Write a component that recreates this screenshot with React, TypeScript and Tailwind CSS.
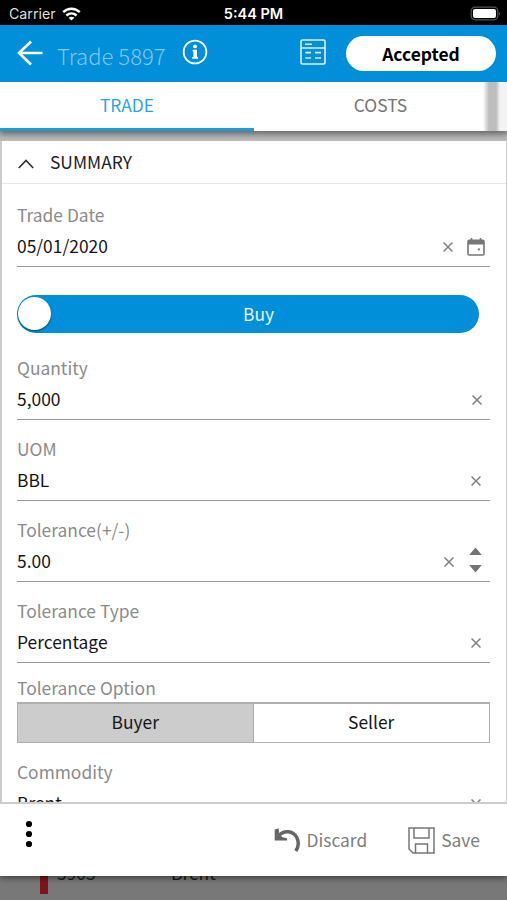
import { useState, type ReactNode } from 'react';

function ClearIcon({ className = '' }: { className?: string }) {
  return (
    <svg className={`h-[10px] w-[10px] ${className}`} viewBox="0 0 10 10" fill="none" stroke="#808080" strokeWidth="1.5">
      <path d="M0.5 0.5L9.5 9.5M9.5 0.5L0.5 9.5" />
    </svg>
  );
}

function Field({ label, value, children }: { label: string; value: string; children?: ReactNode }) {
  return (
    <div className="h-[81px] shrink-0 border-b border-[#999] pt-[17px]">
      <div className="h-6 text-[17.4px] leading-6 text-[#8b8b8b]">{label}</div>
      <div className="flex h-[39px] items-center justify-between">
        <span className="mb-px text-[17.4px] leading-6 text-[#151515]">{value}</span>
        <div className="flex items-center">{children}</div>
      </div>
    </div>
  );
}

function StatusBar() {
  return (
    <div className="grid h-[25px] shrink-0 grid-cols-3 items-center bg-black font-['Inter',sans-serif] text-white">
      <div className="flex items-center gap-[6px] pt-[2px] pl-[9px]">
        <span className="text-[14.2px] leading-5 text-[#ddd]">Carrier</span>
        <svg className="h-[14px] w-[19px]" viewBox="0 0 19 14" fill="none" stroke="white" strokeWidth="2.4">
          <path d="M1.2 5.2C6 0.6 13 0.6 17.8 5.2" />
          <path d="M4.4 8.5C7.4 5.7 11.6 5.7 14.6 8.5" />
          <path d="M9.5 13.6L6.6 10.8C8.2 9.3 10.8 9.3 12.4 10.8Z" fill="white" stroke="none" />
        </svg>
      </div>
      <div className="pt-[2px] text-center text-[14.5px] leading-5 font-semibold">5:44 PM</div>
      <div className="flex items-center justify-end pt-px pr-[6px]">
        <svg className="h-[15px] w-[31px]" viewBox="0 0 31 15" fill="none">
          <rect x="1.2" y="1.2" width="26.6" height="12.6" rx="3.8" stroke="#555" strokeWidth="1.2" />
          <rect x="3" y="3" width="23" height="9" rx="2" fill="white" />
          <path d="M29 5.2Q30.6 7.5 29 9.8Z" fill="#666" />
        </svg>
      </div>
    </div>
  );
}

function Header() {
  return (
    <div className="flex h-[57px] shrink-0 items-center bg-[#008fd8] pr-[11px] pl-[17px] text-white">
      <svg className="mb-[2px] h-[26px] w-[26px] shrink-0" viewBox="0 0 26 26" fill="none" stroke="white" strokeWidth="2.6">
        <path d="M25.5 13H2M14 1.5L2 13L14 24.5" />
      </svg>
      <span className="ml-[14px] w-[109px] pt-[2px] text-[22.1px] leading-7 font-light whitespace-nowrap text-[#82c6ec]">Trade 5897</span>
      <svg className="mb-[3px] ml-[16px] h-[26px] w-[26px] shrink-0" viewBox="0 0 26 26" fill="none" stroke="white">
        <circle cx="13" cy="13" r="11.4" strokeWidth="1.8" />
        <circle cx="13" cy="7.4" r="1.9" fill="white" stroke="none" />
        <path d="M10.6 10.8H15V18H16V19.7H10.2V18H11.4V12.5H10.6Z" fill="white" stroke="none" />
      </svg>
      <svg className="mb-[3px] ml-auto h-[26px] w-[26px]" viewBox="0 0 26 26" fill="none" stroke="#d9effb" strokeWidth="1.6">
        <rect x="1" y="1" width="24" height="24" rx="1.5" />
        <path d="M1 9H25M5 5.2H12M5.4 13.6H11M15 13.6H21M5.4 19H11M15 19H21" />
      </svg>
      <div className="ml-5 flex h-[35px] w-[150px] items-center justify-center rounded-full bg-white text-[17.4px] leading-6 font-bold text-black">
        Accepted
      </div>
    </div>
  );
}

function Tabs() {
  const [tab, setTab] = useState('trade');
  return (
    <div className="relative z-10 flex h-[49px] shrink-0 bg-white text-[17.4px] leading-6 shadow-[0_2px_7px_1px_rgba(0,0,0,0.5)] [clip-path:inset(0_0_-10px_0)]">
      <button
        onClick={() => setTab('trade')}
        className={`w-[254px] border-b-[3px] ${tab === 'trade' ? 'border-[#1b9cd8] text-[#2ba6dc]' : 'border-white text-[#757575]'}`}
      >
        TRADE
      </button>
      <button
        onClick={() => setTab('costs')}
        className={`w-[253px] border-b-[3px] ${tab === 'costs' ? 'border-[#1b9cd8] text-[#2ba6dc]' : 'border-white text-[#757575]'}`}
      >
        COSTS
      </button>
      <div className="absolute top-0 right-0 flex h-[49px] w-[24px]">
        <div className="w-[6px] bg-linear-to-r from-white to-[#bdbdbd]" />
        <div className="w-[7px] bg-[#bdbdbd]" />
        <div className="w-[4px] bg-linear-to-r from-[#bdbdbd] to-[#f3f3f3]" />
        <div className="w-[7px] bg-[#f3f3f3]" />
      </div>
    </div>
  );
}

export default function App() {
  const [option, setOption] = useState('Buyer');

  return (
    <div className="flex h-[900px] w-[507px] flex-col overflow-hidden bg-[#7a7a7a] font-['Noto_Sans_CJK_SC',sans-serif]">
      <StatusBar />
      <Header />
      <Tabs />

      <div className="flex h-[673px] shrink-0 flex-col bg-[#bdbdbd] pt-[10px]">
        <div className="flex min-h-0 flex-1 flex-col overflow-hidden border-r border-b-2 border-l-2 border-[#ccc] bg-white">
          <div className="flex h-[43px] shrink-0 items-center border-b border-[#e6e6e6] pl-[16px]">
            <svg className="mt-[3px] h-[10px] w-[16px]" viewBox="0 0 16 10" fill="none" stroke="#333" strokeWidth="1.7">
              <path d="M0.8 9L8 1.5L15.2 9" />
            </svg>
            <span className="mb-px ml-4 text-[17.4px] leading-6 text-[#222]">SUMMARY</span>
          </div>

          <div className="flex flex-col pt-[2px] pr-[16px] pl-[15px]">
            <Field label="Trade Date" value="05/01/2020">
              <ClearIcon className="mr-[14px]" />
              <svg className="mr-[5px] h-[18px] w-[18px]" viewBox="0 0 18 18" fill="none" stroke="#777" strokeWidth="1.6">
                <rect x="1" y="2.3" width="16" height="14.7" rx="1.2" />
                <path d="M1 3H17V6.5H1Z" fill="#777" stroke="none" />
                <path d="M4.5 0V3M13.5 0V3" />
                <rect x="10.8" y="10.4" width="2" height="2" fill="#777" stroke="none" />
              </svg>
            </Field>

            <div className="mt-[28px] mb-[6px] flex h-[38px] w-[462px] shrink-0 items-center rounded-full bg-[#008fd8] pl-px">
              <div className="mb-px h-[33px] w-[33px] rounded-full bg-white shadow-[0_1px_2px_rgba(0,0,0,0.5)]" />
              <span className="flex-1 pr-[13px] pb-px text-center text-[17.4px] leading-6 text-[#e6f5fd]">Buy</span>
            </div>

            <Field label="Quantity" value="5,000">
              <ClearIcon className="mr-[8px]" />
            </Field>
            <Field label="UOM" value="BBL">
              <ClearIcon className="mr-[9px]" />
            </Field>
            <Field label="Tolerance(+/-)" value="5.00">
              <ClearIcon className="mr-[15px]" />
              <svg className="mr-[8px] mb-[3px] h-[26px] w-[13px]" viewBox="0 0 13 26" fill="#757575">
                <path d="M6.5 0.5L12.8 8H0.2ZM6.5 25.5L0.2 18H12.8Z" />
              </svg>
            </Field>
            <Field label="Tolerance Type" value="Percentage">
              <ClearIcon className="mr-[9px]" />
            </Field>

            <div className="shrink-0 pt-[13px]">
              <div className="h-[26px] text-[17.4px] leading-6 text-[#8b8b8b]">Tolerance Option</div>
              <div className="grid h-[41px] grid-cols-2 border-[1.5px] border-t-2 border-[#b0b0b0] text-[17.4px] leading-6 text-[#151515]">
                {['Buyer', 'Seller'].map((name) => (
                  <button key={name} onClick={() => setOption(name)} className={option === name ? 'border-r border-[#aaa] bg-[#ccc] pb-[3px]' : 'bg-white pb-[3px]'}>
                    {name}
                  </button>
                ))}
              </div>
            </div>

            <Field label="Commodity" value="Brent">
              <ClearIcon className="mr-[9px]" />
            </Field>
          </div>
        </div>
      </div>

      <div className="relative z-10 flex h-[72px] shrink-0 items-center bg-white pr-[27px] pl-[25px] text-[17.4px] leading-6 text-[#7d7d7d] shadow-[0_2px_6px_rgba(0,0,0,0.5)] [clip-path:inset(0_0_-10px_0)]">
        <svg className="mb-[13px] h-[28px] w-[8px]" viewBox="0 0 8 28" fill="black">
          <circle cx="4" cy="4" r="3.1" />
          <circle cx="4" cy="14" r="3.1" />
          <circle cx="4" cy="24" r="3.1" />
        </svg>
        <button className="ml-auto flex items-center">
          <svg className="h-[25px] w-[27px]" viewBox="0 0 27 25" fill="none" stroke="#666">
            <path d="M4 8.5C10 1.5 19 2.5 22.8 9.5C25 14 24.5 19 21.8 23" strokeWidth="3.5" />
            <path d="M0.7 1.5L4.6 0.3L5.4 6.5L8.5 9.2L13.2 10.2L13 12.6H0.7Z" fill="#666" stroke="none" />
          </svg>
          <span className="mb-px ml-[6px]">Discard</span>
        </button>
        <button className="ml-[41px] flex items-center">
          <svg className="h-[27px] w-[27px]" viewBox="0 0 27 27" fill="none" stroke="#777" strokeWidth="1.5">
            <path d="M1 1H26V26H5L1 22Z" />
            <path d="M6 1V11H21V1M7.5 26V17H19.5V26" />
          </svg>
          <span className="mb-px ml-[6px]">Save</span>
        </button>
      </div>

      {/* Trade list behind the dialog */}
      <div className="flex h-[24px] shrink-0 overflow-hidden bg-[#787878] pl-[40px] text-[17.4px] leading-6 text-[#181818]">
        <div className="h-[18px] w-[8px] bg-[#7d161c]" />
        <div className="-mt-[15px] ml-[9px] w-[114px]">5903</div>
        <div className="-mt-[15px]">Brent</div>
      </div>
    </div>
  );
}
